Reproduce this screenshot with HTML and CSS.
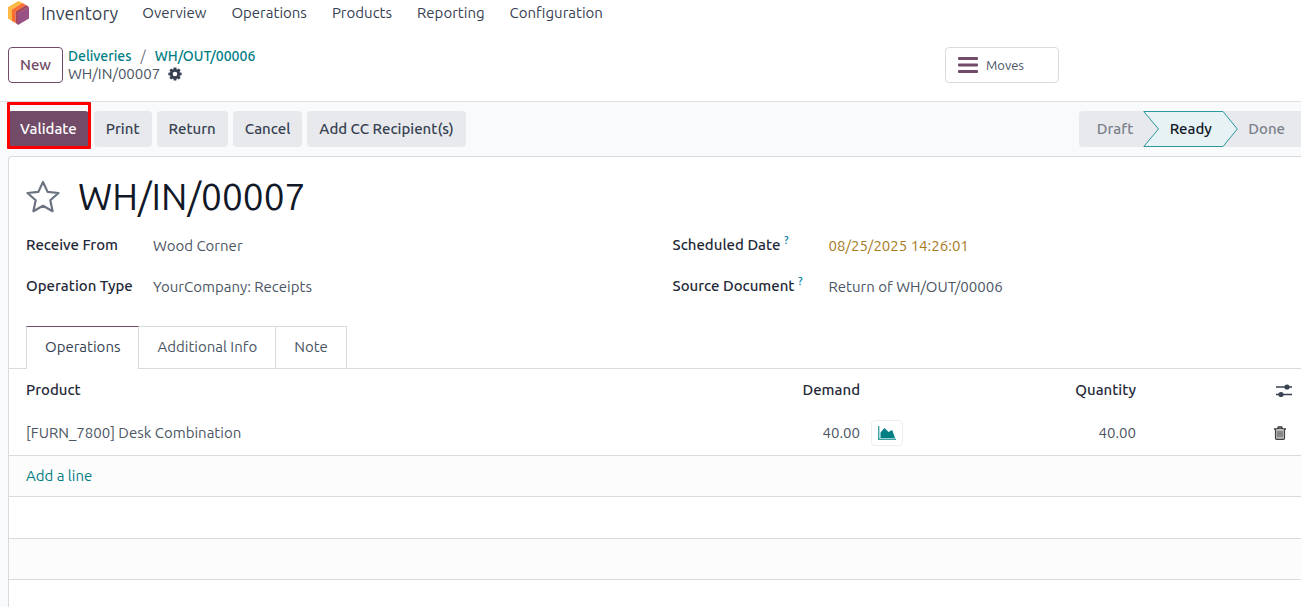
FILE: index.html
```html
<!DOCTYPE html>
<html lang="en">
<head>
<meta charset="utf-8">
<title>WH/IN/00007 - Inventory</title>
<link rel="stylesheet" href="styles.css">
</head>
<body>
<header class="navbar">
  <a class="brand" href="#">
    <svg class="brand-logo" viewBox="0 0 21 24" aria-hidden="true">
      <path d="M10.500 0 0 6v11.500l4 2.500V8.500L14.500 2z" fill="#fbb945"/>
      <path d="M14.500 2 4 8.500V20l3.500 2V10.500L18 4z" fill="#fc6d2f"/>
      <path d="M18 4 7.500 10.500V22l3 2V12.300L21 6z" fill="#a8465a"/>
      <path d="M21 6 10 12.300V24l11-6.500z" fill="#985184"/>
    </svg>
    <span>Inventory</span>
  </a>
  <nav class="menu">
    <a href="#">Overview</a>
    <a href="#">Operations</a>
    <a href="#">Products</a>
    <a href="#">Reporting</a>
    <a href="#">Configuration</a>
  </nav>
</header>

<section class="control-panel">
  <button class="btn-new" type="button">New</button>
  <div class="breadcrumb">
    <div class="crumbs"><a href="#">Deliveries</a><span class="slash">/</span><a href="#">WH/OUT/00006</a></div>
    <div class="current">
      <span>WH/IN/00007</span>
      <button class="icon-btn" type="button" aria-label="Actions">
        <svg class="gear" viewBox="0 0 14 14"><path fill="#374151" fill-rule="evenodd" d="M5.700.5h2.600l.35 1.650.7.32 1.500-1 1.750 1.750-1 1.500.3.7 1.750.3v2.600l-1.750.3-.3.7 1 1.500-1.750 1.750-1.500-1-.7.3-.35 1.650H5.700l-.35-1.650-.7-.3-1.500 1L1.400 10.820l1-1.500-.3-.7L.350 8.320v-2.600l1.750-.3.3-.7-1-1.500L3.150 1.470l1.500 1 .7-.32zM7 4.700a2.300 2.300 0 1 0 0 4.600 2.300 2.300 0 0 0 0-4.600z"/></svg>
      </button>
    </div>
  </div>
  <button class="btn-stat" type="button">
    <svg class="bars" viewBox="0 0 20 16" fill="#714b67"><rect width="20" height="3" rx="1"/><rect y="6.500" width="20" height="3" rx="1"/><rect y="13" width="20" height="3" rx="1"/></svg>
    <span>Moves</span>
  </button>
</section>

<main class="content">
  <div class="statusbar">
    <div class="actions">
      <button class="btn btn-primary" type="button">Validate</button>
      <button class="btn" type="button">Print</button>
      <button class="btn" type="button">Return</button>
      <button class="btn" type="button">Cancel</button>
      <button class="btn" type="button">Add CC Recipient(s)</button>
    </div>
    <div class="steps">
      <button class="step" type="button">Draft</button>
      <button class="step step-active" type="button" aria-current="step">
        <svg class="arrow" viewBox="0 0 95 36" preserveAspectRatio="none" aria-hidden="true"><path d="M.8.500H80L94.300 18 80 35.500H.8L15.500 18z" fill="#e6f2f3" stroke="#2b9a9e"/></svg>
        <span>Ready</span>
      </button>
      <button class="step" type="button">Done</button>
    </div>
  </div>

  <article class="sheet">
    <div class="title">
      <button class="icon-btn" type="button" aria-label="Priority">
        <svg class="star" viewBox="0 0 34 34"><path d="m17 2 4.600 9.900L32.500 13l-8.200 7.300 2.300 10.900L17 25.800l-9.600 5.400 2.300-10.900L1.500 13l10.900-1.100z" fill="none" stroke="#6b7280" stroke-width="2.200" stroke-linejoin="round"/></svg>
      </button>
      <h1>WH/IN/00007</h1>
    </div>

    <div class="groups">
      <dl class="fields">
        <dt>Receive From</dt><dd>Wood Corner</dd>
        <dt>Operation Type</dt><dd>YourCompany: Receipts</dd>
      </dl>
      <dl class="fields fields-wide">
        <dt>Scheduled Date <sup>?</sup></dt><dd class="warning">08/25/2025 14:26:01</dd>
        <dt>Source Document <sup>?</sup></dt><dd>Return of WH/OUT/00006</dd>
      </dl>
    </div>

    <div class="tabs" role="tablist">
      <button class="tab tab-active" type="button" role="tab" aria-selected="true">Operations</button>
      <button class="tab" type="button" role="tab" aria-selected="false">Additional Info</button>
      <button class="tab" type="button" role="tab" aria-selected="false">Note</button>
    </div>

    <table class="lines">
      <colgroup><col><col class="col-demand"><col class="col-forecast"><col class="col-quantity"><col class="col-tools"></colgroup>
      <thead>
        <tr>
          <th>Product</th><th class="num">Demand</th><th></th><th class="num">Quantity</th>
          <th class="tools"><button class="icon-btn" type="button" aria-label="Columns">
            <svg class="sliders" viewBox="0 0 16 13"><path d="M0 3h16M0 10.500h16" stroke="#374151" stroke-width="1.300"/><circle cx="11" cy="3" r="2.600" fill="#374151"/><circle cx="5" cy="10.500" r="2.600" fill="#374151"/></svg>
          </button></th>
        </tr>
      </thead>
      <tbody>
        <tr>
          <td>[FURN_7800] Desk Combination</td><td class="num">40.00</td>
          <td><button class="btn-forecast" type="button" aria-label="Forecast">
            <svg class="chart" viewBox="0 0 18 14"><path d="M.7 0v13.300H18" fill="none" stroke="#3da0a1" stroke-width="1.400"/><path d="M2.500 12V6.500L6.500 2l4 4 3.700-2L17 12z" fill="#017e84"/></svg>
          </button></td>
          <td class="num">40.00</td>
          <td class="tools trash-cell"><button class="icon-btn" type="button" aria-label="Delete">
            <svg class="trash" viewBox="0 0 12 14"><path d="M0 3h12M3.500 3l.8-2h3.400l.8 2" fill="none" stroke="#333" stroke-width="1.300"/><path d="M1.500 3v9.200q0 1.100 1 1.100h7q1 0 1-1.100V3" fill="#bbb" stroke="#444" stroke-width="1.200"/><path d="M4 5v6M6 5v6M8 5v6" stroke="#555"/></svg>
          </button></td>
        </tr>
        <tr><td colspan="5"><a href="#">Add a line</a></td></tr>
        <tr class="blank"><td colspan="5"></td></tr>
        <tr><td colspan="5"></td></tr>
        <tr class="blank"><td colspan="5"></td></tr>
      </tbody>
    </table>
  </article>
</main>
</body>
</html>
```
FILE: styles.css
```css
* { box-sizing: border-box; }

html { height: 100%; overflow: hidden; }

body {
  display: flex;
  flex-direction: column;
  min-height: 100%;
  margin: 0;
  background: #fff;
  color: #4b5563;
  font-family: Ubuntu, "Noto Sans", sans-serif;
  font-size: 15px;
  line-height: 20px;
}

button {
  font: inherit;
  color: inherit;
  cursor: pointer;
}

a { color: #017e84; text-decoration: none; }
svg { display: block; }

.icon-btn { padding: 0; border: 0; background: none; }

.navbar {
  display: flex;
  align-items: center;
  gap: 24px;
  height: 26px;
  padding-left: 8px;
}

.brand {
  display: flex;
  align-items: center;
  gap: 12px;
  color: #374151;
  font-size: 18px;
}

.brand-logo { width: 21px; height: 24px; }
.menu { display: flex; gap: 25px; }
.menu a { color: #374151; }

.control-panel {
  display: flex;
  align-items: center;
  gap: 5px;
  height: 76px;
  padding: 3px 242px 0 8px;
  border-bottom: 1px solid #dee0e3;
}

.btn-new {
  width: 55px;
  height: 36px;
  padding: 0;
  border: 1px solid #714b67;
  border-radius: 4px;
  background: #fff;
  color: #714b67;
  font-weight: 500;
}

.breadcrumb { flex: 1; line-height: 18px; }
.crumbs { font-size: 14px; }
.crumbs a { font-weight: 500; }
.slash { margin: 0 9px; color: #6b7280; }
.current { display: flex; align-items: center; gap: 8px; }
.gear { width: 14px; height: 14px; }

.btn-stat {
  display: flex;
  align-items: center;
  gap: 8px;
  width: 114px;
  height: 36px;
  padding: 0 12px;
  border: 1px solid #d8dadd;
  border-radius: 4px;
  background: #fff;
  font-size: 13px;
}

.bars { width: 20px; height: 16px; }

.content {
  display: flex;
  flex: 1;
  flex-direction: column;
  padding-left: 8px;
  background: #f9fafb;
}

.statusbar {
  display: flex;
  align-items: center;
  justify-content: space-between;
  height: 54px;
}

.actions { display: flex; gap: 5px; }

.btn {
  height: 36px;
  padding: 0 12px;
  border: 0;
  border-radius: 4px;
  background: #e7e9ed;
  color: #374151;
  font-weight: 500;
}

.btn-primary {
  position: relative;
  background: #714b67;
  color: #fff;
}

.btn-primary::after {
  content: "";
  position: absolute;
  inset: -9px -2px -2px -1px;
  border: 3px solid #f00;
  border-radius: 1px;
}

.steps {
  display: flex;
  height: 36px;
  background: #e7e9ed;
  border-radius: 4px 0 0 4px;
}

.step {
  padding: 0 10px 0 18px;
  border: 0;
  background: none;
  color: #7b818c;
  font-weight: 500;
}

.step:last-child { padding: 0 16px 0 10px; }

.step-active {
  position: relative;
  width: 95px;
  padding: 0;
  color: #111827;
}

.step-active span { position: relative; }

.arrow {
  position: absolute;
  inset: 0;
  width: 100%;
  height: 100%;
}

.sheet {
  flex: 1;
  border: solid #d8dadd;
  border-width: 1px 0 0 1px;
  border-radius: 4px 0 0 0;
  background: #fff;
}

.title {
  display: flex;
  align-items: center;
  gap: 18px;
  padding: 16px 17px 8px;
}

.star { width: 34px; height: 34px; }

h1 {
  margin: 0;
  color: #111827;
  font-size: 37px;
  font-weight: 400;
  line-height: 48px;
}

.groups {
  display: grid;
  grid-template-columns: 1fr 1fr;
  padding-left: 17px;
}

.fields {
  display: grid;
  grid-template-columns: 127px 1fr;
  row-gap: 20px;
  margin: 0;
  padding: 6px 0;
}

.fields-wide { grid-template-columns: 156px 1fr; padding-left: 9px; }

dt { color: #1f2937; font-weight: 500; }
dd { margin: 0; padding-top: 1px; }
.warning { color: #a6791c; }

sup {
  color: #0180a5;
  font-size: 11px;
  line-height: 0;
}

.tabs {
  display: flex;
  margin-top: 23px;
  padding-left: 17px;
  border-bottom: 1px solid #d8dadd;
}

.tab {
  height: 42px;
  padding: 0 18px 1px;
  border: 1px solid #d8dadd;
  border-width: 1px 1px 0 0;
  background: #fff;
}

.tab-active {
  height: 43px;
  margin-bottom: -1px;
  padding-bottom: 2px;
  border-left-width: 1px;
  border-top-color: #714b67;
  color: #374151;
}

.lines {
  width: 100%;
  table-layout: fixed;
  border-collapse: collapse;
}

.col-demand { width: 150px; }
.col-forecast { width: 64px; }
.col-quantity { width: 212px; }
.col-tools { width: 165px; }

th, td { height: 41px; padding: 0 0 0 17px; text-align: left; }
th { height: 42px; color: #1f2937; font-weight: 500; }
td { border-bottom: 1px solid #d8dadd; }
tbody tr:first-child td { height: 44px; }
tbody tr:nth-child(even) { background: #fcfcfc; }
.blank td { height: 42px; }
.num { padding: 0; text-align: right; }
.lines .tools { padding-right: 9px; }
.lines .trash-cell { padding-right: 15px; }
.tools button { display: block; margin-left: auto; }
.sliders { width: 16px; height: 13px; }
.trash { width: 12px; height: 14px; }

.lines td:nth-child(3) { padding-left: 11px; }

.btn-forecast {
  display: block;
  padding: 5px 6px;
  border: 1px solid #eceef0;
  border-radius: 4px;
  background: #fff;
}

.chart { width: 18px; height: 14px; }
```
